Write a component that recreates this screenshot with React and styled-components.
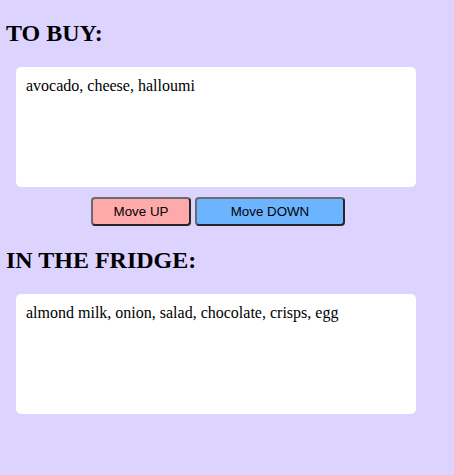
import React, { useState } from 'react'
import styled, { createGlobalStyle } from 'styled-components'

const GlobalStyle = createGlobalStyle`
	html, body {
		margin: 0;
		background: #dcd3ff;
	}
	body {
		font-family: 'Liberation Serif', 'Times New Roman', serif;
		min-height: 475px;
	}
`

const Page = styled.div`
	padding: 0 0 0 6px;
`

const Heading = styled.h2`
	font-size: 24px;
	font-weight: bold;
	margin: 20px 0;
	line-height: 27px;
	color: #000;
`

const ListBox = styled.div`
	box-sizing: border-box;
	width: 400px;
	height: 120px;
	margin-left: 10px;
	padding: 10px;
	background: #fff;
	border-radius: 5px;
	font-size: 16px;
	line-height: 18px;
	color: #000;
`

const ButtonRow = styled.div`
	display: flex;
	justify-content: center;
	gap: 4px;
	width: 400px;
	margin: 10px 0 0 10px;
	padding: 0 0 1px 4px;
	box-sizing: border-box;
`

const MoveButton = styled.button`
	width: ${p => p.$width}px;
	height: 29px;
	background: ${p => p.$bg};
	border: 2px solid;
	border-color: #6b6b6b #262626 #262626 #6b6b6b;
	border-radius: 4px;
	font-family: 'Liberation Sans', Arial, sans-serif;
	font-size: 13.333px;
	color: #000;
	padding: 0;
	cursor: pointer;
`

export default function App() {
	const [toBuy, setToBuy] = useState(['avocado', 'cheese', 'halloumi'])
	const [fridge, setFridge] = useState([
		'almond milk',
		'onion',
		'salad',
		'chocolate',
		'crisps',
		'egg',
	])

	// Move the last item of one list onto the other
	const moveUp = () => {
		if (!fridge.length) return
		setToBuy([...toBuy, fridge[fridge.length - 1]])
		setFridge(fridge.slice(0, -1))
	}

	const moveDown = () => {
		if (!toBuy.length) return
		setFridge([...fridge, toBuy[toBuy.length - 1]])
		setToBuy(toBuy.slice(0, -1))
	}

	return (
		<Page>
			<GlobalStyle />
			<Heading>TO BUY:</Heading>
			<ListBox>{toBuy.join(', ')}</ListBox>
			<ButtonRow>
				<MoveButton $width={100} $bg="#ffaaaa" onClick={moveUp}>
					Move UP
				</MoveButton>
				<MoveButton $width={150} $bg="#6cb4ff" onClick={moveDown}>
					Move DOWN
				</MoveButton>
			</ButtonRow>
			<Heading>IN THE FRIDGE:</Heading>
			<ListBox>{fridge.join(', ')}</ListBox>
		</Page>
	)
}
